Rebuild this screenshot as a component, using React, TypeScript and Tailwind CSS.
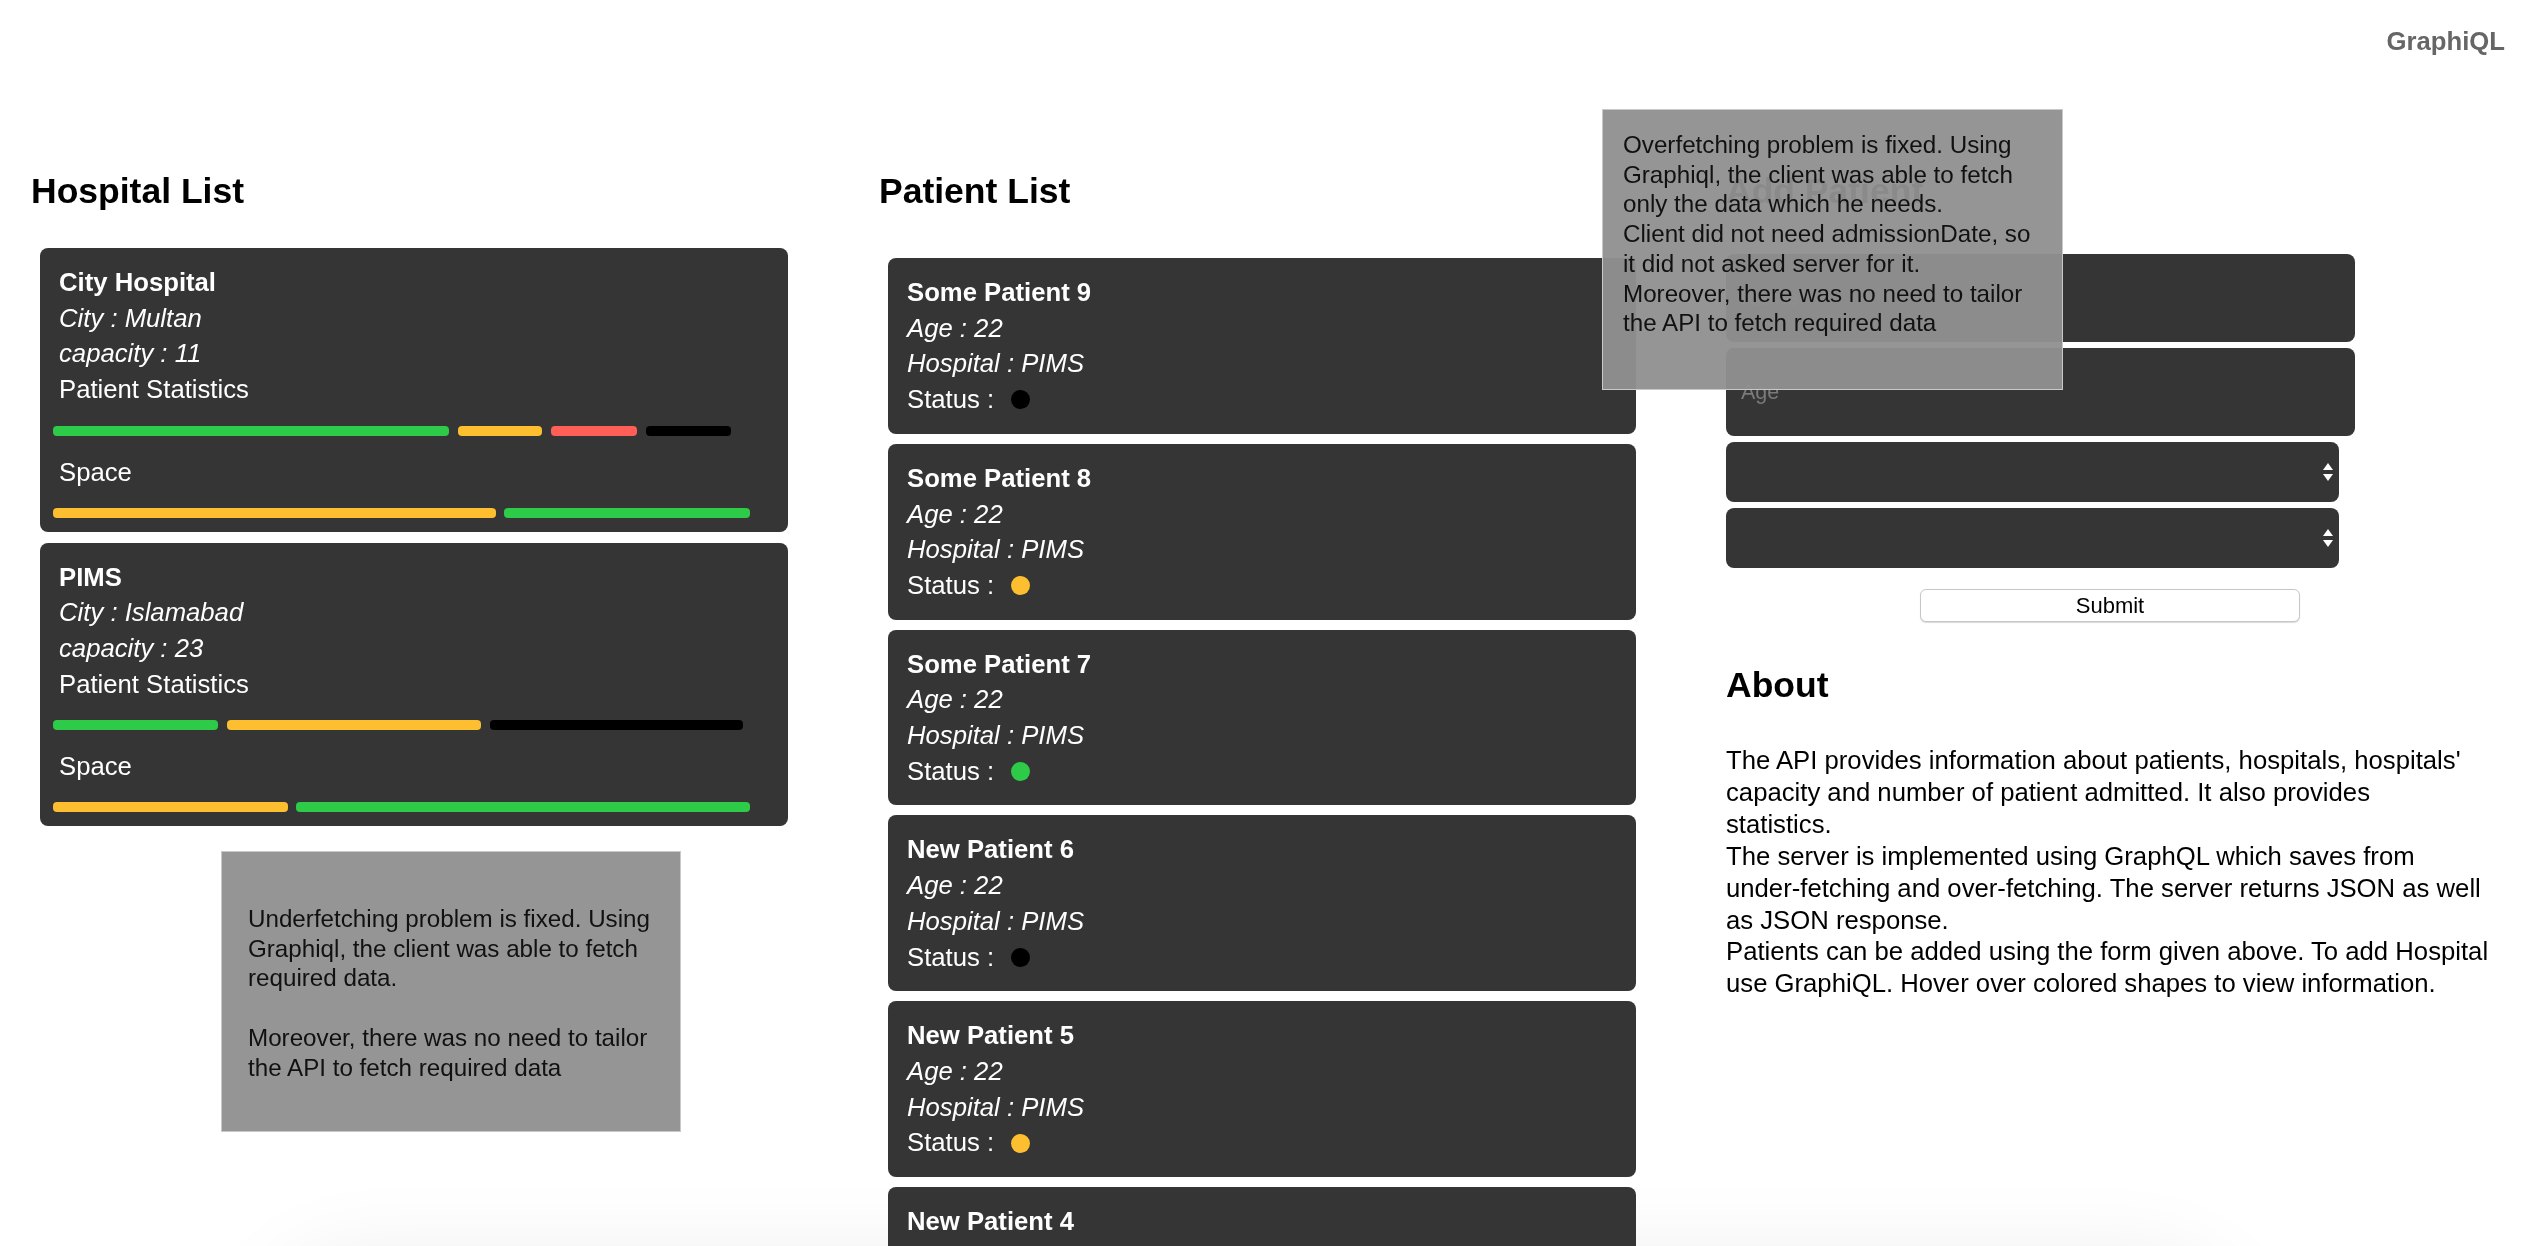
import React from 'react';

type Bar = { color: string; width: number };

const hospitals: { name: string; city: string; capacity: number; stats: Bar[]; space: Bar[] }[] = [
  {
    name: 'City Hospital',
    city: 'Multan',
    capacity: 11,
    stats: [
      { color: '#2dcb48', width: 396 },
      { color: '#fdbf30', width: 84 },
      { color: '#ff5f57', width: 86 },
      { color: '#000000', width: 85 },
    ],
    space: [
      { color: '#fdbf30', width: 443 },
      { color: '#2dcb48', width: 246 },
    ],
  },
  {
    name: 'PIMS',
    city: 'Islamabad',
    capacity: 23,
    stats: [
      { color: '#2dcb48', width: 165 },
      { color: '#fdbf30', width: 254 },
      { color: '#000000', width: 253 },
    ],
    space: [
      { color: '#fdbf30', width: 235 },
      { color: '#2dcb48', width: 454 },
    ],
  },
];

const patients = [
  { name: 'Some Patient 9', status: '#000000' },
  { name: 'Some Patient 8', status: '#fdbf30' },
  { name: 'Some Patient 7', status: '#2dcb48' },
  { name: 'New Patient 6', status: '#000000' },
  { name: 'New Patient 5', status: '#fdbf30' },
  { name: 'New Patient 4', status: '#2dcb48' },
  { name: 'New Patient 3', status: '#000000' },
  { name: 'New Patient 2', status: '#fdbf30' },
  { name: 'New Patient 1', status: '#2dcb48' },
];

const BarRow: React.FC<{ bars: Bar[]; gap: string }> = ({ bars, gap }) => (
  <div className={`flex ml-[-6px] ${gap}`}>
    {bars.map((b, i) => (
      <div key={i} className="h-[10px] rounded-[4px]" style={{ width: b.width, backgroundColor: b.color }} />
    ))}
  </div>
);

const SelectArrows = () => (
  <svg width="10" height="18" viewBox="0 0 10 18" className="shrink-0">
    <polygon points="0,7 5,0 10,7" fill="#ffffff" />
    <polygon points="0,11 10,11 5,18" fill="#ffffff" />
  </svg>
);

const App: React.FC = () => {
  return (
    <div className="min-h-screen text-black font-['Liberation_Sans',Arial,sans-serif]">
      {/* soft shadow at the bottom edge */}
      <div className="fixed -z-10 left-[300px] top-[1300px] w-[1900px] h-[200px] rounded-[60px] shadow-[0_0_90px_40px_rgba(0,0,0,0.08)]" />

      <div className="flex justify-end pr-[27px] pt-[26px]">
        <span className="text-[25.7px] leading-[30px] font-bold text-[#666666]">GraphiQL</span>
      </div>

      <div className="flex pl-[31px] pt-[115px] pb-[40px]">
        {/* Hospitals */}
        <div className="w-[848px] shrink-0">
          <h2 className="text-[35.5px] leading-[40px] font-bold">Hospital List</h2>
          <div className="ml-[9px] mt-[37px] w-[748px] flex flex-col gap-[11px]">
            {hospitals.map((h) => (
              <div key={h.name} className="bg-[#353535] rounded-[8px] text-white text-[25.7px] leading-[35.7px] pt-[17px] pb-[14px] pl-[19px]">
                <div className="font-bold">{h.name}</div>
                <div className="italic">City : {h.city}</div>
                <div className="italic">capacity : {h.capacity}</div>
                <div>Patient Statistics</div>
                <div className="mt-[18px]">
                  <BarRow bars={h.stats} gap="gap-[9px]" />
                </div>
                <div className="mt-[19px]">Space</div>
                <div className="mt-[17px]">
                  <BarRow bars={h.space} gap="gap-[8px]" />
                </div>
              </div>
            ))}
          </div>
          <div className="ml-[190px] mt-[25px] w-[460px] bg-[#959595] border border-[#c9c9c9] text-[#111111] text-[24.2px] leading-[29.7px] pt-[52px] pb-[49px] px-[26px]">
            Underfetching problem is fixed. Using Graphiql, the client was able to fetch required data.
            <br />
            <br />
            Moreover, there was no need to tailor the API to fetch required data
          </div>
        </div>

        {/* Patients */}
        <div className="w-[847px] shrink-0">
          <h2 className="text-[35.5px] leading-[40px] font-bold">Patient List</h2>
          <div className="ml-[9px] mt-[47px] w-[748px] flex flex-col gap-[10px]">
            {patients.map((p) => (
              <div key={p.name} className="bg-[#353535] rounded-[8px] text-white text-[25.7px] leading-[35.7px] pt-[17px] pb-[16px] pl-[19px]">
                <div className="font-bold">{p.name}</div>
                <div className="italic">Age : 22</div>
                <div className="italic">Hospital : PIMS</div>
                <div className="flex items-center h-[35.7px]">
                  <span>Status :</span>
                  <span className="ml-[17px] w-[19px] h-[19px] rounded-full" style={{ backgroundColor: p.status }} />
                </div>
              </div>
            ))}
          </div>
        </div>

        {/* Form + About */}
        <div className="w-[775px] shrink-0 relative">
          <h2 className="text-[35.5px] leading-[40px] font-bold">Add Patient</h2>
          <form className="mt-[43px] flex flex-col" onSubmit={(e) => e.preventDefault()}>
            <input
              type="text"
              placeholder="Name"
              className="w-[629px] h-[88px] rounded-[8px] bg-[#353535] text-white text-[21.5px] px-[15px] outline-none placeholder:text-[#7a7a7a]"
            />
            <input
              type="text"
              placeholder="Age"
              className="mt-[6px] w-[629px] h-[88px] rounded-[8px] bg-[#353535] text-white text-[21.5px] px-[15px] outline-none placeholder:text-[#7a7a7a]"
            />
            <div className="mt-[6px] w-[613px] h-[60px] rounded-[8px] bg-[#353535] flex items-center pr-[6px]">
              <select className="flex-1 h-full appearance-none bg-transparent text-white text-[21.5px] px-[15px] outline-none" />
              <SelectArrows />
            </div>
            <div className="mt-[6px] w-[613px] h-[60px] rounded-[8px] bg-[#353535] flex items-center pr-[6px]">
              <select className="flex-1 h-full appearance-none bg-transparent text-white text-[21.5px] px-[15px] outline-none" />
              <SelectArrows />
            </div>
            <button
              type="submit"
              className="mt-[21px] ml-[194px] w-[380px] h-[33px] bg-white border border-[#c6c6c6] rounded-[6px] shadow-[0_1px_1px_rgba(0,0,0,0.15)] text-[22px] leading-[31px] text-black"
            >
              Submit
            </button>
          </form>

          <h2 className="mt-[43px] text-[35.5px] leading-[40px] font-bold">About</h2>
          <p className="mt-[40px] w-[790px] text-[25.7px] leading-[31.9px]">
            The API provides information about patients, hospitals, hospitals'
            <br />
            capacity and number of patient admitted. It also provides
            <br />
            statistics.
            <br />
            The server is implemented using GraphQL which saves from
            <br />
            under-fetching and over-fetching. The server returns JSON as well
            <br />
            as JSON response.
            <br />
            Patients can be added using the form given above. To add Hospital
            <br />
            use GraphiQL. Hover over colored shapes to view information.
          </p>

          {/* hover tooltip over the form */}
          <div className="absolute left-[-124px] top-[-62px] z-10 w-[461px] h-[281px] bg-[rgba(144,144,144,0.955)] border border-[#c9c9c9] text-[#111111] text-[24.2px] leading-[29.7px] pt-[20px] px-[20px]">
            Overfetching problem is fixed. Using Graphiql, the client was able to fetch only the data which he needs.
            <br />
            Client did not need admissionDate, so it did not asked server for it.
            <br />
            Moreover, there was no need to tailor the API to fetch required data
          </div>
        </div>
      </div>
    </div>
  );
};

export default App;
